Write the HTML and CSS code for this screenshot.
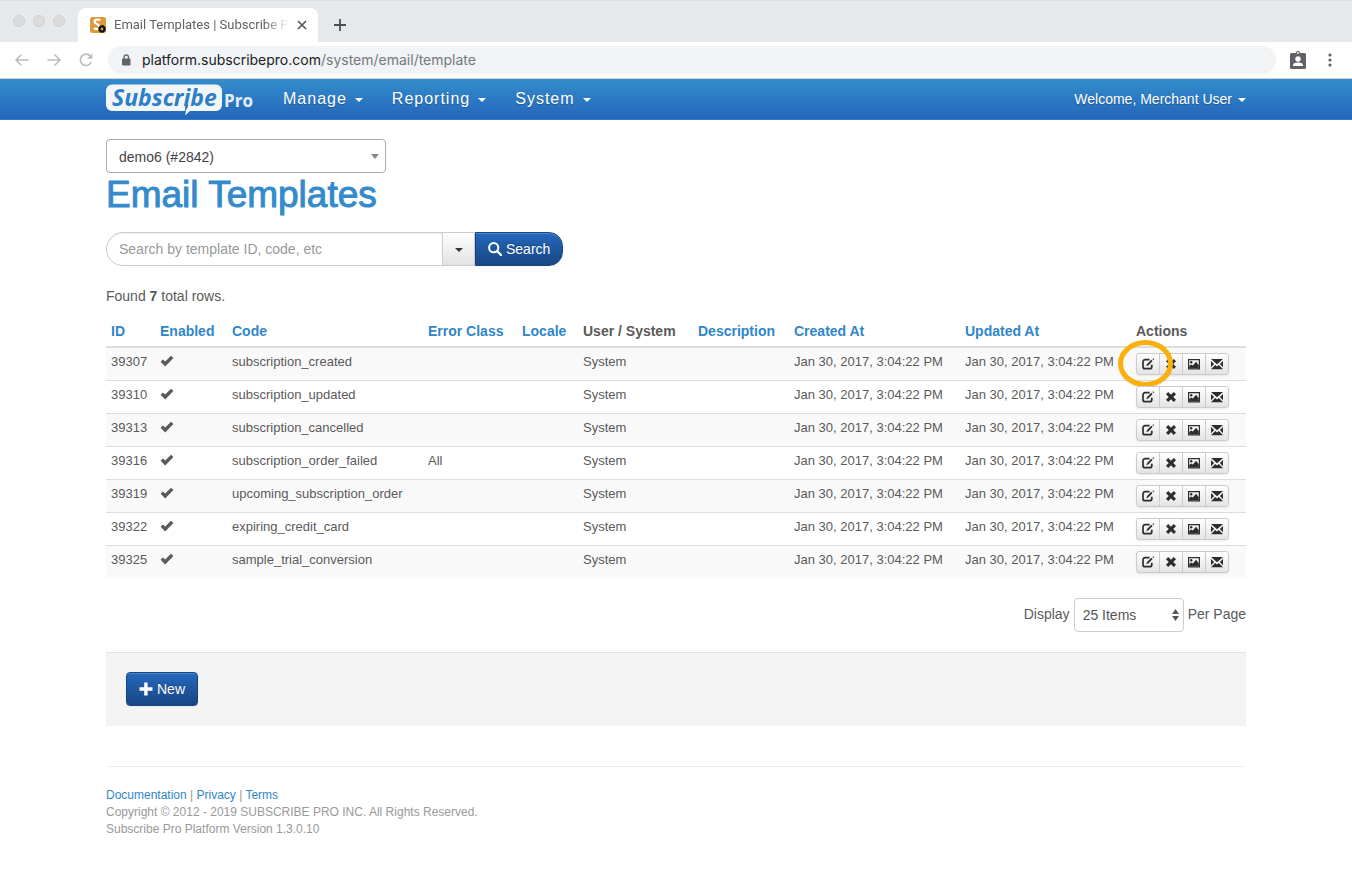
FILE: index.html
```html
<!DOCTYPE html>
<html lang="en">
<head>
<meta charset="utf-8">
<title>Email Templates | Subscribe Pro</title>
<link rel="stylesheet" href="styles.css">
</head>
<body>
<svg class="sprite" aria-hidden="true">
  <symbol id="check" viewBox="0 0 14 12"><path d="M.6 6.800 2.900 4.500 5.200 6.600 11 .7l2.400 2.200L5.200 11.400z" fill="currentColor"/></symbol>
  <symbol id="edit" viewBox="0 0 14 14"><path d="M8.600 2.700H4A2 2 0 0 0 2 4.700v5A2 2 0 0 0 4 11.700h4.800a2 2 0 0 0 2-2V7.800" fill="none" stroke="currentColor" stroke-width="1.700"/><path d="M5.300 9.300 6.100 6.900 10.300 2.700 11.600 4 7.500 8.300zM11.400 1.900 12.100 1.200l1.200 1.200-.7.700z" fill="currentColor"/></symbol>
  <symbol id="cross" viewBox="0 0 14 14"><path d="M4.200 2 7 4.800 9.800 2 12 4.200 9.200 7 12 9.800 9.800 12 7 9.200 4.200 12 2 9.800 4.800 7 2 4.200z" fill="currentColor"/></symbol>
  <symbol id="picture" viewBox="0 0 14 14"><path fill-rule="evenodd" d="M1 2h12v10.500H1zM2.200 3.200v8h9.600v-8z" fill="currentColor"/><circle cx="4.200" cy="5.200" r="1.200" fill="currentColor"/><path d="M2.200 11.200V9l2-1.600 1.600 1.100L9 4.800l2.800 3.400v3z" fill="currentColor"/></symbol>
  <symbol id="mail" viewBox="0 0 14 14"><path d="M1 2h12L7 7.300zM1 3.900 4.100 7 1 10.200zM13 3.900V10.200L9.900 7zM1 12.200 5.200 8 7 9.600 8.800 8 13 12.200z" fill="currentColor"/></symbol>
  <symbol id="search" viewBox="0 0 14 14"><circle cx="5.700" cy="5.700" r="4.600" fill="none" stroke="currentColor" stroke-width="2"/><path d="m9 9 4 4" stroke="currentColor" stroke-width="2.400" stroke-linecap="round"/></symbol>
  <symbol id="plus" viewBox="0 0 14 14"><path d="M5.200.5h3.400v4.800h4.900v3.400H8.600v4.800H5.200V8.700H.5V5.300h4.700z" fill="currentColor"/></symbol>
</svg>

<div class="chrome">
  <div class="tabstrip">
    <div class="lights"><i></i><i></i><i></i></div>
    <div class="tab">
      <svg class="favicon" width="16" height="16" viewBox="0 0 16 16" aria-hidden="true"><rect width="16" height="16" rx="2.500" fill="#dc9a3c"/><path d="M10.300 3.300C8.400 2.200 4.600 2.100 4.600 4.700 4.600 7.300 9.500 6.600 9.500 9.600c0 2.600-3.700 2.800-5.700 1.500" fill="none" stroke="#fff" stroke-width="2.300"/><circle cx="12" cy="12" r="2.400" fill="none" stroke="#111" stroke-width="2"/><circle cx="12" cy="12" r="3.500" fill="none" stroke="#111" stroke-width="1" stroke-dasharray="1.500 1.250"/></svg>
      <span class="tab-title">Email Templates | Subscribe Pro</span>
      <button class="plain" aria-label="Close tab"><svg width="10" height="10" viewBox="0 0 10 10"><path d="m1 1 8 8M9 1 1 9" stroke="#4b4f53" stroke-width="1.500"/></svg></button>
    </div>
    <button class="plain" aria-label="New tab"><svg width="12" height="12" viewBox="0 0 12 12"><path d="M6 0v12M0 6h12" stroke="#4b4f53" stroke-width="1.800"/></svg></button>
  </div>
  <div class="toolbar">
    <button class="plain" aria-label="Back"><svg width="16" height="16" viewBox="0 0 16 16"><path d="M14.500 8H2M7.500 2.500 2 8l5.500 5.500" fill="none" stroke="#b9bbbd" stroke-width="1.500"/></svg></button>
    <button class="plain" aria-label="Forward"><svg width="16" height="16" viewBox="0 0 16 16"><path d="M1.500 8H14M8.500 2.500 14 8l-5.500 5.500" fill="none" stroke="#b9bbbd" stroke-width="1.500"/></svg></button>
    <button class="plain" aria-label="Reload"><svg width="16" height="16" viewBox="0 0 16 16"><path d="M13.400 9.800A5.700 5.700 0 1 1 12.300 4" fill="none" stroke="#b9bbbd" stroke-width="1.600"/><path d="M14.300 1.500v5.300H9z" fill="#b9bbbd"/></svg></button>
    <div class="address">
      <svg width="10" height="12" viewBox="0 0 10 12" aria-hidden="true"><rect x="1" y="4.500" width="8.500" height="7" rx="1" fill="#5f6368"/><path d="M3 5V3.200a2.250 2.250 0 0 1 4.500 0V5" fill="none" stroke="#5f6368" stroke-width="1.300"/></svg>
      <span class="url"><b>platform.subscribepro.com</b>/system/email/template</span>
    </div>
    <button class="plain" aria-label="Profile"><svg width="16" height="20" viewBox="0 0 16 20"><rect y="3" width="16" height="16" rx="1.500" fill="#5f6368"/><circle cx="8" cy="3" r="2" fill="#5f6368"/><circle cx="8" cy="3" r=".9" fill="#fff"/><circle cx="8" cy="9" r="2.700" fill="#fff"/><path d="M3 16v-1c0-1.800 3-2.500 5-2.500s5 .7 5 2.500v1z" fill="#fff"/></svg></button>
    <button class="plain" aria-label="Menu"><svg width="16" height="16" viewBox="0 0 16 16"><g fill="#5f6368"><circle cx="8" cy="3" r="1.600"/><circle cx="8" cy="8" r="1.600"/><circle cx="8" cy="13" r="1.600"/></g></svg></button>
  </div>
</div>

<nav class="navbar">
  <div class="container nav-inner">
    <a class="brand" href="#" aria-label="Subscribe Pro">
      <svg class="logo" width="148" height="32" viewBox="0 0 148 32">
        <path d="M6 .5h104a6 6 0 0 1 6 6V21a6 6 0 0 1-6 6H84l-5 4.500 1-4.500H6a6 6 0 0 1-6-6V6.500a6 6 0 0 1 6-6z" fill="#f3f6f9"/>
        <text class="logo-word" x="6" y="22">Subscribe</text>
        <path d="M78.700 20h3.600L81.500 24 78.500 28 79.200 24z" fill="#2f7fc6"/>
        <text class="logo-pro" x="118" y="23">Pro</text>
      </svg>
    </a>
    <a class="nav-link" href="#">Manage<span class="caret"></span></a>
    <a class="nav-link" href="#">Reporting<span class="caret"></span></a>
    <a class="nav-link" href="#">System<span class="caret"></span></a>
    <a class="user-link" href="#">Welcome, Merchant User<span class="caret"></span></a>
  </div>
</nav>

<main class="container">
  <div class="site-picker">
    <select class="site-select" aria-label="Site"><option>demo6 (#2842)</option></select>
  </div>
  <h1>Email Templates</h1>
  <form class="search">
    <input class="search-input" type="text" aria-label="Search templates" placeholder="Search by template ID, code, etc">
    <button class="search-toggle" type="button" aria-label="Search options"><span class="caret"></span></button>
    <button class="btn-primary search-btn" type="button"><svg class="icon"><use href="#search"/></svg>Search</button>
  </form>
  <p class="found">Found <b>7</b> total rows.</p>

  <table class="grid">
    <colgroup><col class="c-id"><col class="c-enabled"><col class="c-code"><col class="c-error"><col class="c-locale"><col class="c-user"><col class="c-desc"><col class="c-date"><col class="c-date"><col class="c-actions"></colgroup>
    <thead><tr><th><a href="#">ID</a></th><th><a href="#">Enabled</a></th><th><a href="#">Code</a></th><th><a href="#">Error Class</a></th><th><a href="#">Locale</a></th><th>User / System</th><th><a href="#">Description</a></th><th><a href="#">Created At</a></th><th><a href="#">Updated At</a></th><th>Actions</th></tr></thead>
    <tbody>
      <tr><td>39307</td><td><svg class="tick"><use href="#check"/></svg></td><td>subscription_created</td><td></td><td></td><td>System</td><td></td><td>Jan 30, 2017, 3:04:22 PM</td><td>Jan 30, 2017, 3:04:22 PM</td><td><div class="actions"><button aria-label="Edit"><svg><use href="#edit"/></svg></button><button aria-label="Delete"><svg><use href="#cross"/></svg></button><button aria-label="Preview"><svg><use href="#picture"/></svg></button><button aria-label="Send"><svg><use href="#mail"/></svg></button><span class="ring"></span></div></td></tr>
      <tr><td>39310</td><td><svg class="tick"><use href="#check"/></svg></td><td>subscription_updated</td><td></td><td></td><td>System</td><td></td><td>Jan 30, 2017, 3:04:22 PM</td><td>Jan 30, 2017, 3:04:22 PM</td><td><div class="actions"><button aria-label="Edit"><svg><use href="#edit"/></svg></button><button aria-label="Delete"><svg><use href="#cross"/></svg></button><button aria-label="Preview"><svg><use href="#picture"/></svg></button><button aria-label="Send"><svg><use href="#mail"/></svg></button></div></td></tr>
      <tr><td>39313</td><td><svg class="tick"><use href="#check"/></svg></td><td>subscription_cancelled</td><td></td><td></td><td>System</td><td></td><td>Jan 30, 2017, 3:04:22 PM</td><td>Jan 30, 2017, 3:04:22 PM</td><td><div class="actions"><button aria-label="Edit"><svg><use href="#edit"/></svg></button><button aria-label="Delete"><svg><use href="#cross"/></svg></button><button aria-label="Preview"><svg><use href="#picture"/></svg></button><button aria-label="Send"><svg><use href="#mail"/></svg></button></div></td></tr>
      <tr><td>39316</td><td><svg class="tick"><use href="#check"/></svg></td><td>subscription_order_failed</td><td>All</td><td></td><td>System</td><td></td><td>Jan 30, 2017, 3:04:22 PM</td><td>Jan 30, 2017, 3:04:22 PM</td><td><div class="actions"><button aria-label="Edit"><svg><use href="#edit"/></svg></button><button aria-label="Delete"><svg><use href="#cross"/></svg></button><button aria-label="Preview"><svg><use href="#picture"/></svg></button><button aria-label="Send"><svg><use href="#mail"/></svg></button></div></td></tr>
      <tr><td>39319</td><td><svg class="tick"><use href="#check"/></svg></td><td>upcoming_subscription_order</td><td></td><td></td><td>System</td><td></td><td>Jan 30, 2017, 3:04:22 PM</td><td>Jan 30, 2017, 3:04:22 PM</td><td><div class="actions"><button aria-label="Edit"><svg><use href="#edit"/></svg></button><button aria-label="Delete"><svg><use href="#cross"/></svg></button><button aria-label="Preview"><svg><use href="#picture"/></svg></button><button aria-label="Send"><svg><use href="#mail"/></svg></button></div></td></tr>
      <tr><td>39322</td><td><svg class="tick"><use href="#check"/></svg></td><td>expiring_credit_card</td><td></td><td></td><td>System</td><td></td><td>Jan 30, 2017, 3:04:22 PM</td><td>Jan 30, 2017, 3:04:22 PM</td><td><div class="actions"><button aria-label="Edit"><svg><use href="#edit"/></svg></button><button aria-label="Delete"><svg><use href="#cross"/></svg></button><button aria-label="Preview"><svg><use href="#picture"/></svg></button><button aria-label="Send"><svg><use href="#mail"/></svg></button></div></td></tr>
      <tr><td>39325</td><td><svg class="tick"><use href="#check"/></svg></td><td>sample_trial_conversion</td><td></td><td></td><td>System</td><td></td><td>Jan 30, 2017, 3:04:22 PM</td><td>Jan 30, 2017, 3:04:22 PM</td><td><div class="actions"><button aria-label="Edit"><svg><use href="#edit"/></svg></button><button aria-label="Delete"><svg><use href="#cross"/></svg></button><button aria-label="Preview"><svg><use href="#picture"/></svg></button><button aria-label="Send"><svg><use href="#mail"/></svg></button></div></td></tr>
    </tbody>
  </table>

  <div class="pager">
    <label for="per-page">Display</label>
    <span class="page-picker"><select class="page-select" id="per-page"><option>25 Items</option></select><svg class="updown" viewBox="0 0 7 12" aria-hidden="true"><path d="M3.500 0 7 5H0zM3.500 12 0 7h7z" fill="#555"/></svg></span>
    <span>Per Page</span>
  </div>

  <div class="form-actions">
    <button class="btn-primary new-btn"><svg class="icon"><use href="#plus"/></svg>New</button>
  </div>

  <footer>
    <div><a href="#">Documentation</a> | <a href="#">Privacy</a> | <a href="#">Terms</a></div>
    <div>Copyright © 2012 - 2019 SUBSCRIBE PRO INC. All Rights Reserved.</div>
    <div>Subscribe Pro Platform Version 1.3.0.10</div>
  </footer>
</main>
</body>
</html>
```

FILE: styles.css
```css
* { box-sizing: border-box; }
body { margin: 0; background: #fff; color: #5a5a5a; font: 14px/20px "Liberation Sans", Arial, sans-serif; }
a { color: #2f86c9; text-decoration: none; }
button, input, select { font: inherit; margin: 0; }
button { cursor: pointer; }
.sprite { display: none; }
.container { width: calc(100% - 32px); max-width: 1140px; margin: 0 auto; }
.plain { display: flex; align-items: center; justify-content: center; padding: 0; border: 0; background: none; }

/* Browser frame */
.chrome { font-family: Roboto, sans-serif; border-bottom: 1px solid #d5d3d1; }
.tabstrip { display: flex; align-items: flex-end; height: 42px; background: #e6e9ec; border-top: 1px solid #dcdfe2; }
.tabstrip > .plain { height: 34px; margin-left: 16px; }
.lights { display: flex; gap: 8px; height: 41px; width: 78px; padding: 14px 0 0 13px; }
.lights i { width: 12px; height: 12px; border: 1px solid #d0d0d0; border-radius: 50%; background: #dcdcdc; }
.tab { display: flex; align-items: center; gap: 8px; width: 240px; height: 34px; padding: 0 11px 0 12px; border-radius: 8px 8px 0 0; background: #fff; }
.tab-title { flex: 1; overflow: hidden; white-space: nowrap; color: #5f6368; font-size: 13px; -webkit-mask-image: linear-gradient(to right, #000 86%, transparent); mask-image: linear-gradient(to right, #000 86%, transparent); }
.favicon { flex: none; }
.toolbar { display: flex; align-items: center; gap: 16px; height: 36px; padding: 0 14px; }
.address { display: flex; flex: 1; align-items: center; gap: 11px; height: 28px; margin-left: -2px; margin-right: -2px; padding-left: 13px; border-radius: 14px; background: #f1f3f4; }
.url { color: #75797d; font-family: Inter, sans-serif; font-size: 14px; }
.url b { color: #202124; font-weight: 400; }

/* Navigation */
.navbar { background: linear-gradient(#348dcc, #2466bb); border-bottom: 1px solid #2d7fc4; }
.nav-inner { display: flex; align-items: center; height: 40px; }
.brand { display: flex; margin-right: 29px; padding-top: 2px; }
.logo { overflow: visible; }
.logo-word { fill: #2f7fc6; font: italic 700 23px "Open Sans", sans-serif; }
.logo-pro { fill: #e4eef8; font: 700 17px "Open Sans", sans-serif; }
.nav-link, .user-link { display: flex; align-items: center; color: #fff; text-shadow: 0 1px 1px rgba(0, 0, 0, .25); }
.nav-link { margin-right: 29px; font-size: 16px; letter-spacing: 1px; }
.nav-link .caret { margin-left: 8px; }
.user-link { margin-left: auto; }
.user-link .caret { margin-left: 6px; }
.caret { display: block; margin-top: 2px; border: 4px solid transparent; border-top-color: currentColor; border-bottom: 0; }

/* Heading and search */
.site-picker { position: relative; width: 280px; margin-top: 19px; }
.site-picker::after { content: ""; position: absolute; right: 7px; top: 15px; border: 4px solid transparent; border-top: 5px solid #888; border-bottom: 0; pointer-events: none; }
.site-select { display: block; appearance: none; width: 100%; height: 34px; padding: 2px 12px 0; border: 1px solid #aaa; border-radius: 4px; background: #fff; color: #444; }
h1 { margin: 2px 0 17px; color: #348bcb; font-size: 37px; line-height: 40px; font-weight: 400; -webkit-text-stroke: 1px #348bcb; }
.search { display: flex; height: 34px; }
.search-input { width: 337px; padding: 0 12px; border: 1px solid #ccc; border-radius: 17px 0 0 17px; box-shadow: inset 0 1px 1px rgba(0, 0, 0, .08); }
.search-input::placeholder { color: #999; }
.search-toggle { display: flex; align-items: center; justify-content: center; width: 33px; margin-left: -1px; padding: 0; border: 1px solid #ccc; background: linear-gradient(#fff, #e2e2e2); color: #333; }
.btn-primary { display: flex; align-items: center; justify-content: center; gap: 4px; height: 34px; border: 1px solid #164584; background: linear-gradient(#2568be, #184682); color: #fff; text-shadow: 0 -1px 0 rgba(0, 0, 0, .25); box-shadow: inset 0 1px 0 rgba(255, 255, 255, .2), 0 1px 2px rgba(0, 0, 0, .05); }
.icon { width: 14px; height: 14px; }
.search-btn { padding: 0 12px; border-radius: 0 14px 14px 0; }
.new-btn { padding: 0 12px; border-radius: 4px; }
.found { margin: 20px 0 10px; }

/* Template table */
.grid { width: 100%; border-collapse: separate; border-spacing: 0; table-layout: fixed; font-size: 13px; line-height: 18px; }
.c-id { width: 49px; }
.c-enabled { width: 72px; }
.c-code { width: 196px; }
.c-error { width: 94px; }
.c-locale { width: 61px; }
.c-user { width: 115px; }
.c-desc { width: 96px; }
.c-date { width: 171px; }
.c-actions { width: 115px; }
.grid th { padding: 6px 5px; border-bottom: 2px solid #ddd; font-size: 14px; text-align: left; white-space: nowrap; }
.grid td { padding: 5px; border-top: 1px solid #ddd; vertical-align: top; white-space: nowrap; }
.grid tbody tr:first-child td { border-top: 0; }
.grid tbody tr:nth-child(odd) { background: #f9f9f9; }
.tick { display: block; width: 14px; height: 12px; margin-top: 2px; }
.actions { display: flex; position: relative; width: 93px; height: 22px; border: 1px solid #ccc; border-radius: 3px; background: linear-gradient(#fff, #e4e4e4); box-shadow: 0 1px 2px rgba(0, 0, 0, .08); }
.actions button { display: flex; flex: 1; align-items: center; justify-content: center; padding: 0; border: 0; border-right: 1px solid #ccc; background: none; color: #2d2d2d; }
.actions button:last-of-type { border-right: 0; }
.actions svg { width: 14px; height: 14px; }
.ring { position: absolute; left: -19px; top: -14px; width: 55px; height: 47px; border: 5px solid #fbaf0b; border-radius: 50%; box-shadow: 0 1px 1px rgba(0, 0, 0, .15); pointer-events: none; }

/* Paging, form actions and footer */
.pager { display: flex; justify-content: flex-end; gap: 4px; margin: 20px 0; line-height: 32px; }
.page-picker { position: relative; }
.page-select { display: block; appearance: none; width: 110px; height: 34px; padding: 0 8px; border: 1px solid #ccc; border-radius: 4px; background: #fff; color: #555; }
.updown { position: absolute; right: 5px; top: 11px; width: 7px; height: 12px; pointer-events: none; }
.form-actions { padding: 19px 20px 20px; border-top: 1px solid #e2e2e2; background: #f4f4f4; }
footer { margin: 40px 0; padding-top: 20px; border-top: 1px solid #eee; color: #999; font-size: 12px; line-height: 17px; }
```
